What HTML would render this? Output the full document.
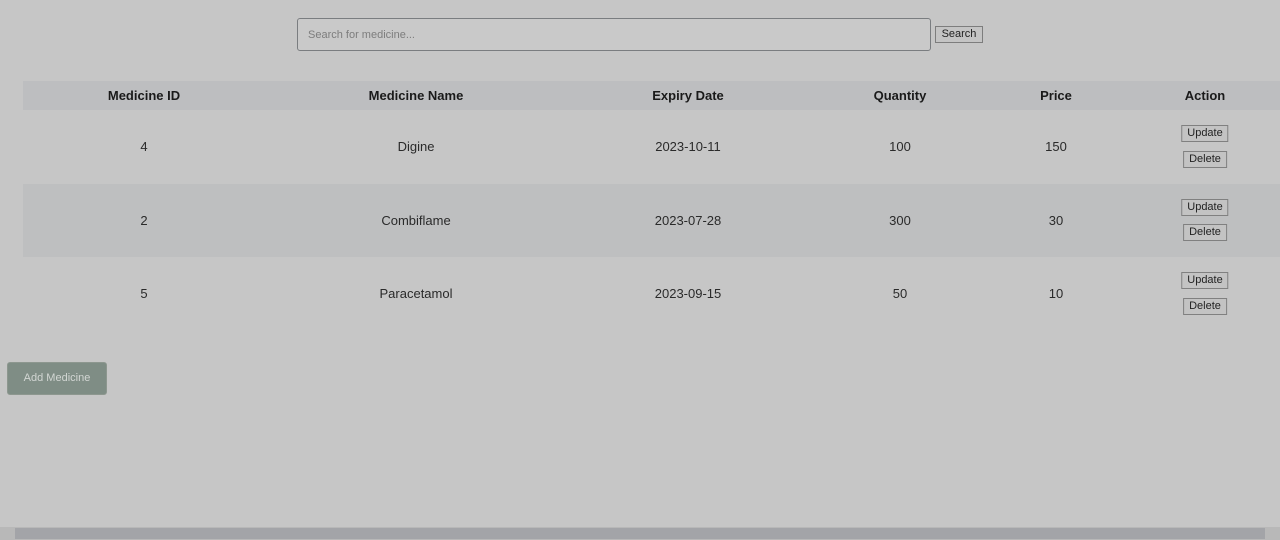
<!DOCTYPE html>
<html><head><style>
*{box-sizing:border-box;margin:0;padding:0}
body{width:1280px;height:540px;background:#c6c6c6;font-family:"Liberation Sans",sans-serif;position:relative;overflow:hidden;color:#1a1a1a}
.search{position:absolute;left:297px;top:18px;width:634px;height:33px;border:1px solid #7a7d80;border-radius:3px;background:#c9c9c9;font-size:11px;color:#7d7d7d;padding:10px 10px}
.sbtn{position:absolute;left:935px;top:26px;width:48px;height:17px;border:1px solid #7d7d7d;background:#c4c4c4;font-size:11px;text-align:center;line-height:15px;color:#222}
.row{position:absolute;left:23px;width:1257px}
.hdr{top:81px;height:29px;background:#bdbec0;font-weight:bold;font-size:13px}
.c{position:absolute;transform:translateX(-50%);white-space:nowrap}
.hdr .c{top:7px}
.r .c{top:29px;font-size:13px;color:#2a2a2a}
.b{position:absolute;transform:translateX(-50%);border:1px solid #808080;background:#c3c3c3;font-size:11px;padding:1px 5px;color:#222;line-height:13px}
.add{position:absolute;left:7px;top:362px;width:100px;height:33px;background:#7f8d85;border:1px solid #8d978f;border-radius:3px;color:#d2d6d3;font-size:11px;text-align:center;line-height:31px}
.sb{position:absolute;left:0;top:527px;width:1280px;height:13px;background:#b8b8b8}
.sb i{position:absolute;left:15px;right:15px;top:1px;bottom:1px;background:#a3a4a8}
</style></head><body>
<div class="search">Search for medicine...</div>
<div class="sbtn">Search</div>
<div class="row hdr">
<span class="c" style="left:121px">Medicine ID</span>
<span class="c" style="left:393px">Medicine Name</span>
<span class="c" style="left:665px">Expiry Date</span>
<span class="c" style="left:877px">Quantity</span>
<span class="c" style="left:1033px">Price</span>
<span class="c" style="left:1182px">Action</span>
</div>
<div class="row r" style="top:110px;height:74px;background:#c6c6c6">
<span class="c" style="left:121px">4</span><span class="c" style="left:393px">Digine</span><span class="c" style="left:665px">2023-10-11</span><span class="c" style="left:877px">100</span><span class="c" style="left:1033px">150</span>
<span class="b" style="left:1182px;top:15px">Update</span><span class="b" style="left:1182px;top:41px">Delete</span>
</div>
<div class="row r" style="top:184px;height:73px;background:#bebfc0">
<span class="c" style="left:121px">2</span><span class="c" style="left:393px">Combiflame</span><span class="c" style="left:665px">2023-07-28</span><span class="c" style="left:877px">300</span><span class="c" style="left:1033px">30</span>
<span class="b" style="left:1182px;top:15px">Update</span><span class="b" style="left:1182px;top:40px">Delete</span>
</div>
<div class="row r" style="top:257px;height:73px;background:#c6c6c6">
<span class="c" style="left:121px">5</span><span class="c" style="left:393px">Paracetamol</span><span class="c" style="left:665px">2023-09-15</span><span class="c" style="left:877px">50</span><span class="c" style="left:1033px">10</span>
<span class="b" style="left:1182px;top:15px">Update</span><span class="b" style="left:1182px;top:41px">Delete</span>
</div>
<div class="add">Add Medicine</div>
<div class="sb"><i></i></div>
</body></html>
